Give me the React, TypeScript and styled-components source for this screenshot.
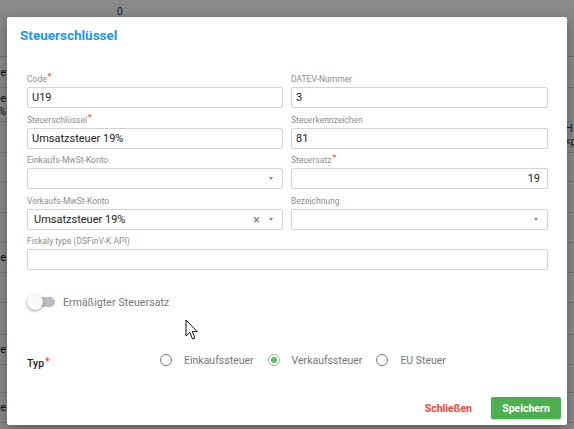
import React from "react";
import styled, { createGlobalStyle } from "styled-components";

const GlobalStyle = createGlobalStyle`
  html, body {
    margin: 0;
    padding: 0;
    background: #ffffff;
  }
  body {
    font-family: Roboto, "Liberation Sans", sans-serif;
  }
  * {
    box-sizing: border-box;
  }
`;

interface BgRow {
  left?: string[];
  right?: string[];
  height: number;
}

const bgRows: BgRow[] = [
  { left: ["Vorsteuer 7e"], height: 31 },
  { left: ["Vorsteuer 19e", "19%"], height: 34 },
  { right: ["H", "<p"], height: 31 },
  { height: 29 },
  { height: 31 },
  { height: 30 },
  { left: ["Innergemeinschaftliche"], height: 30 },
  { height: 30 },
  { height: 32 },
  { left: ["Umsatzsteuere"], height: 30 },
  { height: 28 },
  { left: ["Ware"], height: 30 },
  { height: 30 }
];

const App = () => {
  return (
    <>
      <GlobalStyle />
      <Page>
        <Backdrop>
          <BgHeader>
            <BgHeaderCount>0</BgHeaderCount>
          </BgHeader>
          {bgRows.map((row, i) => (
            <BgTableRow key={i} style={{ height: row.height }}>
              <BgLeftCell>
                {row.left?.map(t => (
                  <BgLine key={t}>{t}</BgLine>
                ))}
              </BgLeftCell>
              <BgMiddle />
              <BgRightCell>
                {row.right?.map(t => (
                  <BgLine key={t}>{t}</BgLine>
                ))}
              </BgRightCell>
            </BgTableRow>
          ))}
        </Backdrop>
        <Overlay />
        <Modal>
          <Title>Steuerschlüssel</Title>
          <Form>
            <Field>
              <Label>
                Code<Req>*</Req>
              </Label>
              <Input defaultValue="U19" />
            </Field>
            <Field>
              <Label>DATEV-Nummer</Label>
              <Input defaultValue="3" />
            </Field>
            <Field>
              <Label>
                Steuerschlüssel<Req>*</Req>
              </Label>
              <Input defaultValue="Umsatzsteuer 19%" />
            </Field>
            <Field>
              <Label>Steuerkennzeichen</Label>
              <Input defaultValue="81" />
            </Field>
            <Field>
              <Label>Einkaufs-MwSt-Konto</Label>
              <Select>
                <SelectValue />
                <Caret />
              </Select>
            </Field>
            <Field>
              <Label>
                Steuersatz<Req>*</Req>
              </Label>
              <Input defaultValue="19" $alignRight />
            </Field>
            <Field>
              <Label>Verkaufs-MwSt-Konto</Label>
              <Select>
                <SelectValue>Umsatzsteuer 19%</SelectValue>
                <ClearIcon>×</ClearIcon>
                <Caret />
              </Select>
            </Field>
            <Field>
              <Label>Bezeichnung</Label>
              <Select>
                <SelectValue />
                <Caret />
              </Select>
            </Field>
            <Field $wide>
              <Label>Fiskaly type (DSFinV-K API)</Label>
              <Input defaultValue="" />
            </Field>
          </Form>

          <ToggleRow>
            <Toggle>
              <ToggleTrack />
              <ToggleKnob />
            </Toggle>
            <ToggleLabel>Ermäßigter Steuersatz</ToggleLabel>
          </ToggleRow>

          <TypeRow>
            <TypeLabel>
              Typ<Req>*</Req>
            </TypeLabel>
            <RadioGroup>
              <RadioItem>
                <RadioCircle />
                <RadioText>Einkaufssteuer</RadioText>
              </RadioItem>
              <RadioItem>
                <RadioCircle $checked />
                <RadioText>Verkaufssteuer</RadioText>
              </RadioItem>
              <RadioItem>
                <RadioCircle />
                <RadioText>EU Steuer</RadioText>
              </RadioItem>
            </RadioGroup>
          </TypeRow>

          <Footer>
            <TextButton>Schließen</TextButton>
            <PrimaryButton>Speichern</PrimaryButton>
          </Footer>
        </Modal>
        <Cursor viewBox="0 0 14 22" width="14" height="22">
          <path
            d="M1 1 L1 17 L4.8 13.4 L7.6 20 L10 19 L7.3 12.6 L12.2 12.6 Z"
            fill="#ffffff"
            stroke="#111111"
            strokeWidth="1"
            strokeLinejoin="round"
          />
        </Cursor>
      </Page>
    </>
  );
};

export default App;

const Page = styled.div`
  position: relative;
  width: 574px;
  height: 429px;
  overflow: hidden;
  background: #ffffff;
`;

const Backdrop = styled.div`
  display: flex;
  flex-direction: column;
  width: 100%;
  height: 100%;
  font-size: 11px;
  color: #222;
`;

const BgHeader = styled.div`
  height: 57px;
  flex-shrink: 0;
  border-bottom: 1px solid #cfcfcf;
  padding: 5px 0 0 117px;
`;

const BgHeaderCount = styled.span`
  font-size: 10px;
  color: #1c3a78;
`;

const BgTableRow = styled.div`
  display: flex;
  flex-shrink: 0;
  align-items: center;
  border-bottom: 1px solid #d8d8d8;
`;

const BgLeftCell = styled.div`
  width: 6px;
  overflow: hidden;
  display: flex;
  flex-direction: column;
  align-items: flex-end;
  white-space: nowrap;
`;

const BgLine = styled.span`
  line-height: 13px;
`;

const BgMiddle = styled.div`
  flex: 1;
`;

const BgRightCell = styled.div`
  width: 10px;
  white-space: nowrap;
  overflow: hidden;
  display: flex;
  flex-direction: column;
  padding: 0 0 4px 1px;
  color: #1c2a4a;
`;

const Overlay = styled.div`
  position: absolute;
  inset: 0;
  background: rgba(0, 0, 0, 0.46);
`;

const Modal = styled.div`
  position: absolute;
  left: 7px;
  top: 17px;
  width: 560px;
  height: 408px;
  background: #ffffff;
  border-radius: 2px;
  box-shadow: 0 4px 14px rgba(0, 0, 0, 0.35);
  display: flex;
  flex-direction: column;
  padding: 10px 6px 6px 13px;
`;

const Title = styled.h2`
  margin: 0;
  height: 16px;
  line-height: 16px;
  font-size: 13.5px;
  font-weight: 700;
  color: #2196f3;
`;

const Form = styled.div`
  display: grid;
  grid-template-columns: 256px 257px;
  column-gap: 8px;
  row-gap: 1.5px;
  margin: 26px 0 0 7px;
`;

const Field = styled.div<{ $wide?: boolean }>`
  display: flex;
  flex-direction: column;
  grid-column: ${props => (props.$wide ? "1 / span 2" : "auto")};
`;

const Label = styled.label`
  height: 18px;
  padding-top: 4px;
  line-height: 12px;
  font-size: 8.5px;
  color: #8d8d8d;
  white-space: nowrap;
`;

const Req = styled.span`
  color: #f44336;
  position: relative;
  top: -2px;
  margin-left: 1px;
`;

const Input = styled.input<{ $alignRight?: boolean }>`
  height: 21px;
  border: 1px solid #d3d3d3;
  border-radius: 2px;
  padding: 0 7px 0 4px;
  font-family: Roboto, "Liberation Sans", sans-serif;
  font-size: 11px;
  color: #212121;
  outline: none;
  text-align: ${props => (props.$alignRight ? "right" : "left")};
`;

const Select = styled.div`
  height: 21px;
  border: 1px solid #d3d3d3;
  border-radius: 2px;
  display: flex;
  align-items: center;
  padding: 0 9px 0 6px;
`;

const SelectValue = styled.span`
  flex: 1;
  font-size: 11px;
  color: #212121;
`;

const ClearIcon = styled.span`
  font-size: 13px;
  color: #7a7a7a;
  margin-right: 9px;
  line-height: 1;
`;

const Caret = styled.span`
  width: 0;
  height: 0;
  border-left: 2.5px solid transparent;
  border-right: 2.5px solid transparent;
  border-top: 3px solid #8a8a8a;
`;

const ToggleRow = styled.div`
  display: flex;
  align-items: center;
  height: 20px;
  margin: 22px 0 0 7px;
`;

const Toggle = styled.div`
  position: relative;
  width: 28px;
  height: 16px;
`;

const ToggleTrack = styled.div`
  position: absolute;
  left: 5px;
  top: 3px;
  width: 23px;
  height: 10px;
  border-radius: 5px;
  background: #bdbdbd;
`;

const ToggleKnob = styled.div`
  position: absolute;
  left: 0;
  top: 0;
  width: 16px;
  height: 16px;
  border-radius: 50%;
  background: #fafafa;
  box-shadow: 0 1px 3px rgba(0, 0, 0, 0.4);
`;

const ToggleLabel = styled.span`
  margin-left: 8px;
  font-size: 10.5px;
  color: #757575;
  letter-spacing: 0.1px;
`;

const TypeRow = styled.div`
  display: flex;
  align-items: center;
  height: 20px;
  margin: 38px 0 0 7px;
`;

const TypeLabel = styled.span`
  width: 133px;
  font-size: 10.5px;
  font-weight: 500;
  color: #212121;
  position: relative;
  top: 3px;
`;

const RadioGroup = styled.div`
  display: flex;
  align-items: center;
  gap: 14px;
`;

const RadioItem = styled.label`
  display: flex;
  align-items: center;
  gap: 12px;
`;

const RadioCircle = styled.span<{ $checked?: boolean }>`
  width: 12px;
  height: 12px;
  border-radius: 50%;
  border: 1.5px solid ${props => (props.$checked ? "#81c784" : "#757575")};
  display: flex;
  align-items: center;
  justify-content: center;
  &::after {
    content: "";
    width: 6px;
    height: 6px;
    border-radius: 50%;
    background: ${props => (props.$checked ? "#66bb6a" : "transparent")};
  }
`;

const RadioText = styled.span`
  font-size: 10.5px;
  color: #757575;
`;

const Footer = styled.div`
  display: flex;
  justify-content: flex-end;
  align-items: center;
  gap: 9px;
  margin-top: 27px;
`;

const TextButton = styled.button`
  height: 22px;
  padding: 0 10px;
  border: none;
  background: transparent;
  font-family: Roboto, "Liberation Sans", sans-serif;
  font-size: 10.5px;
  font-weight: 700;
  color: #f44336;
`;

const PrimaryButton = styled.button`
  width: 70px;
  height: 22px;
  border: none;
  border-radius: 2px;
  background: #4caf50;
  font-family: Roboto, "Liberation Sans", sans-serif;
  font-size: 10.5px;
  font-weight: 700;
  color: #ffffff;
  box-shadow: 0 1px 2px rgba(0, 0, 0, 0.2);
`;

const Cursor = styled.svg`
  position: absolute;
  left: 185px;
  top: 319px;
`;
